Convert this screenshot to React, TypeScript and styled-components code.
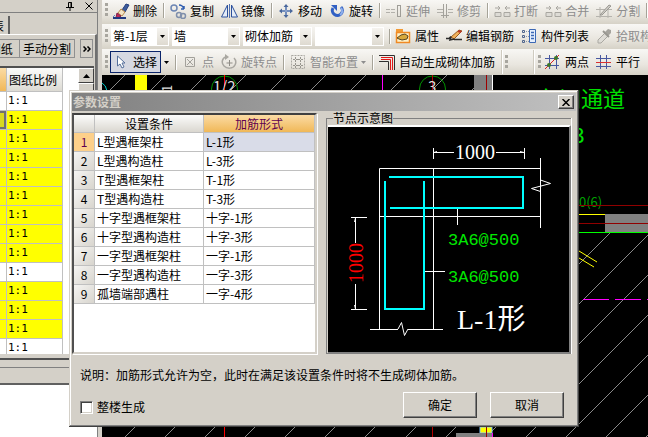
import React from "react";
import styled, { createGlobalStyle, css } from "styled-components";

const face = "#d4d0c8";
const ui = `"Noto Sans CJK SC", "Liberation Sans", sans-serif`;
const serif = `"Liberation Serif", "Noto Sans CJK SC", serif`;

const GlobalStyle = createGlobalStyle`
  * { box-sizing: border-box; }
  html, body { margin: 0; height: 100%; overflow: hidden; }
  body { background: #000; color: #000; font: 12px/16px ${ui}; }
  button, select, input { font: inherit; color: inherit; margin: 0; padding: 0; border-radius: 0; }
  table { border-collapse: separate; border-spacing: 0; }
  svg { display: block; flex: none; }
`;

/* ---------- page frame ---------- */

const Page = styled.div`
  display: grid;
  grid-template-columns: 102px minmax(0, 1fr);
  height: 100vh;
  overflow: hidden;
`;

const Side = styled.aside`
  display: flex;
  flex-direction: column;
  background: #fff;
  border-right: 4px solid ${face};
  box-shadow: inset -1px 0 #808080;
  overflow: hidden;
`;

const Main = styled.main`
  display: flex;
  flex-direction: column;
  min-width: 0;
`;

/* ---------- left panel ---------- */

const SidePanel = styled.section`
  background: ${face};
  border-bottom: 2px solid #606060;
  margin-right: 1px;
`;

const Caption = styled.header`
  display: flex;
  justify-content: flex-end;
  align-items: center;
  gap: 11px;
  height: 13px;
  padding-right: 4px;
  border-bottom: 1px solid #808080;
`;

const IconButton = styled.button`
  display: flex;
  background: none;
  border: 0;
`;

const TabStrip = styled.div`
  display: flex;
  align-items: flex-end;
  height: 21px;
`;

const Tab = styled.button`
  display: flex;
  justify-content: flex-end;
  align-items: center;
  width: 10px;
  height: 18px;
  padding-right: 4px;
  padding-top: 1px;
  overflow: hidden;
  background: ${face};
  border: 0;
  border-right: 2px solid #606060;
  white-space: nowrap;
`;

const TabPage = styled.div`
  padding-bottom: 2px;
  border-top: 1px solid #fff;
  border-right: 2px solid #707070;
  border-bottom: 2px solid #505050;
`;

const SideTools = styled.div`
  display: flex;
  height: 31px;
  padding: 4px 2px 8px 0;
`;

const SideButton = styled.button<{ $w: number; $clip?: boolean; $gap?: number }>`
  display: flex;
  justify-content: ${(p) => (p.$clip ? "flex-end" : "center")};
  align-items: center;
  width: ${(p) => p.$w}px;
  margin-left: ${(p) => p.$gap ?? 0}px;
  padding-right: ${(p) => (p.$clip ? 6 : 0)}px;
  overflow: hidden;
  white-space: nowrap;
  background: ${face};
  border: 1px solid #909090;
  border-left-width: ${(p) => (p.$gap ? 1 : 0)}px;
`;

const SheetFrame = styled.div`
  display: flex;
  height: 290px;
  margin-right: 1px;
  overflow: hidden;
  background: #fff;
  border-top: 2px solid #505050;
  border-bottom: 2px solid ${face};
`;

const Sheet = styled.table`
  flex: none;
  align-self: flex-start;
  width: 63px;
  table-layout: fixed;
  line-height: 16px;
`;

const SheetHead = styled.th<{ $active?: boolean }>`
  height: 24px;
  padding: 0 2px;
  overflow: hidden;
  white-space: nowrap;
  text-align: left;
  font-weight: 400;
  background: ${(p) =>
    p.$active ? "linear-gradient(#fbdba4, #f0b858)" : "linear-gradient(#fbfbfa, #dcdad3)"};
  border-right: 1px solid #c0c0c0;
  border-bottom: 1px solid #c0c0c0;
`;

const SheetCell = styled.td<{ $marked: boolean; $current?: boolean }>`
  height: 19px;
  padding: 0 1px;
  background: ${(p) => (p.$current ? "#d8d820" : p.$marked ? "#ff0" : "#fff")};
  border-right: 1px solid #c0c0c0;
  border-bottom: 1px solid #c0c0c0;
  font: 11px/18px "DejaVu Sans Mono", monospace;
  ${(p) =>
    p.$current &&
    css`
      box-shadow: inset -2px 2px #707070, inset 0 -2px #707070;
    `}
`;

const ScrollBar = styled.div`
  flex: none;
  width: 16px;
  margin-left: auto;
  background: #ebe9e4;
`;

const ScrollPart = styled.button<{ $h: number }>`
  display: flex;
  justify-content: center;
  align-items: center;
  width: 16px;
  height: ${(p) => p.$h}px;
  background: ${face};
  border: 1px solid;
  border-color: #fff #404040 #404040 #fff;
`;

const SideFooter = styled.div`
  height: 8px;
  border-bottom: 1px solid #808080;
`;

const SideStatus = styled.div`
  height: 15px;
`;

/* ---------- tool bars ---------- */

const Bar = styled.div<{ $h: number; $low?: number }>`
  display: flex;
  align-items: center;
  height: ${(p) => p.$h}px;
  padding-left: 3px;
  padding-bottom: ${(p) => p.$low ?? 0}px;
  overflow: hidden;
  white-space: nowrap;
  background: linear-gradient(#f8f7f4, #e9e6df 60%, #d6d2c7);
`;

const Grip = styled.i<{ $lead?: number }>`
  flex: none;
  width: 3px;
  height: 15px;
  margin-left: ${(p) => p.$lead ?? 0}px;
  background: repeating-linear-gradient(#a8a69f 0 3px, transparent 3px 5px);
`;

const Tools = styled.div<{ $lead: number }>`
  display: flex;
  align-items: center;
  gap: 7px;
  margin-left: ${(p) => p.$lead}px;
`;

const ToolButton = styled.button<{ $off?: boolean }>`
  flex: none;
  display: flex;
  align-items: center;
  gap: 3px;
  height: 20px;
  background: none;
  border: 0;
  color: ${(p) => (p.$off ? "#8d8d8d" : "#000")};
`;

const PickButton = styled(ToolButton)`
  gap: 7px;
  width: 51px;
  height: 22px;
  padding-left: 5px;
  margin-left: 2px;
  background: #d6d8e2;
  border: 1px solid #0a246a;
`;

const Divider = styled.i`
  flex: none;
  width: 1px;
  height: 15px;
  margin: 0 -1px;
  background: #a6a398;
  box-shadow: 1px 0 #fff;
`;

const BarEnd = styled.i<{ $lead: number }>`
  flex: none;
  width: 2px;
  height: 24px;
  margin-left: ${(p) => p.$lead}px;
  background: #cfcbc0;
  border-right: 1px solid #fff;
`;

const ComboWrap = styled.label<{ $w: number }>`
  position: relative;
  flex: none;
  width: ${(p) => p.$w}px;
  height: 19px;
  background: #fff;
`;

const ComboSelect = styled.select`
  appearance: none;
  width: 100%;
  height: 19px;
  padding-left: 2px;
  background: transparent;
  border: 0;
  outline: 0;
`;

const ComboArrow = styled.span`
  position: absolute;
  top: 1px;
  right: 1px;
  display: flex;
  justify-content: center;
  align-items: center;
  width: 11px;
  height: 17px;
  background: linear-gradient(#f5f3ef, #dedad0);
  pointer-events: none;
`;

const Combos = styled.div`
  display: flex;
  gap: 3px;
  margin-left: 3px;
  margin-right: 6px;
`;

const Canvas = styled.div`
  flex: 1;
  min-height: 0;
  overflow: hidden;
  background: #000;
`;

/* ---------- dialog ---------- */

const Dialog = styled.section`
  position: absolute;
  top: 90px;
  left: 69px;
  right: 69px;
  padding: 3px;
  background: ${face};
  box-shadow: inset -1px -1px #404040, inset 1px 1px ${face}, inset -2px -2px #808080,
    inset 2px 2px #fff;
`;

const TitleBar = styled.header`
  display: flex;
  justify-content: space-between;
  align-items: center;
  height: 18px;
  padding: 0 2px 0 1px;
  background: linear-gradient(90deg, #808080, #c0c0c0);
`;

const Title = styled.h1`
  margin: 0;
  font: 700 12px/16px ${ui};
  color: ${face};
`;

const raised = css`
  background: ${face};
  border: 1px solid;
  border-color: #fff #404040 #404040 #fff;
  box-shadow: inset -1px -1px #808080;
`;

const CloseButton = styled.button`
  ${raised}
  display: flex;
  justify-content: center;
  align-items: center;
  width: 16px;
  height: 14px;
`;

const Body = styled.div`
  display: grid;
  grid-template-columns: minmax(0, 1fr) minmax(0, 1fr);
  gap: 9px;
  padding: 1px 5px 0 0;
`;

const GridFrame = styled.div`
  margin-top: 1px;
  background: #fff;
  border: 2px solid;
  border-color: #404040 ${face} ${face} #505050;
  box-shadow: 1px 1px #fff;
`;

const RuleTable = styled.table`
  width: 100%;
  table-layout: fixed;
`;

const lines = css`
  padding: 0 2px;
  overflow: hidden;
  white-space: nowrap;
  border-right: 1px solid #c0c0c0;
  border-bottom: 1px solid #c0c0c0;
`;

const HeadCell = styled.th<{ $active?: boolean }>`
  ${lines}
  height: 18px;
  font-weight: 400;
  line-height: 17px;
  color: ${(p) => (p.$active ? "#600050" : "#000")};
  background: ${(p) =>
    p.$active ? "linear-gradient(#fbdba4, #f0b858)" : "linear-gradient(#fcfcfb, #dad7d0)"};
`;

const NumberCell = styled.th<{ $active?: boolean }>`
  ${lines}
  height: 19px;
  font-weight: 400;
  line-height: 18px;
  color: ${(p) => (p.$active ? "#600050" : "#000")};
  background: ${(p) => (p.$active ? "#fdd08a" : "linear-gradient(135deg, #f6f5f3, #d8d5ce)")};
`;

const Cell = styled.td<{ $active?: boolean }>`
  ${lines}
  height: 19px;
  line-height: 18px;
  background: ${(p) => (p.$active ? "#d9dce8" : "#fff")};
`;

const Group = styled.fieldset`
  min-width: 0;
  margin: 0;
  padding: 0;
  border: 1px solid #808080;
  border-right: 0;
  box-shadow: 1px 0 #fff;
`;

const Legend = styled.legend`
  margin-left: 6px;
  padding: 0;
  height: 13px;
  line-height: 12px;
`;

const Preview = styled.div`
  margin-left: 1px;
  background: #000;
  border-top: 2px solid #fff;
  border-right: 2px solid #808080;
  border-bottom: 1px solid #808080;
`;

const Note = styled.p`
  margin: 12px 8px 9px;
  line-height: 17px;
`;

const Footer = styled.footer`
  display: flex;
  align-items: center;
  gap: 13px;
  padding: 0 12px 6px 8px;
`;

const CheckLabel = styled.label`
  display: flex;
  align-items: center;
  gap: 4px;
  margin-right: auto;
  padding-top: 4px;
`;

const Check = styled.input`
  appearance: none;
  width: 13px;
  height: 13px;
  background: #fff;
  border: 1px solid;
  border-color: #808080 #fff #fff #808080;
  box-shadow: inset 1px 1px #404040, inset -1px -1px ${face};
  &:checked { background: #404040; }
`;

const PushButton = styled.button`
  ${raised}
  width: 74px;
  height: 26px;
`;

/* ---------- icons ---------- */

const Icon = ({ children, w = 17 }: { children: React.ReactNode; w?: number }) => (
  <svg width={w} height="16" viewBox={`0 0 ${w} 16`} fill="none" aria-hidden="true">
    {children}
  </svg>
);

const EraseIcon = () => (
  <Icon>
    <path d="M9 7 13 1l3 1-4 7z" fill="#3d5c9c" stroke="#27407c" />
    <path d="m8 6 4 3-3 4-4-3z" fill="#f3e4c6" stroke="#b88a4c" />
    <path d="m4 10 4 3-2 1.500H3z" fill="#c02858" stroke="#802048" />
    <path d="M0 15h13" stroke="#203880" strokeWidth="2" />
    <path d="M2 12 0 14" stroke="#6080c0" />
  </Icon>
);
const CopyIcon = () => (
  <Icon>
    <circle cx="4" cy="5" r="3" stroke="#6d86b4" strokeWidth="1.500" />
    <circle cx="9" cy="12" r="2.500" stroke="#8090ac" strokeWidth="1.500" />
    <circle cx="13" cy="13" r="2.500" stroke="#8090ac" strokeWidth="1.500" />
    <path d="M9 2c3 0 4 1 5 4m0 0V3m0 3h-3" stroke="#2f5db0" strokeWidth="1.500" />
  </Icon>
);
const MirrorIcon = () => (
  <Icon>
    <path d="M6.500 2v12h-6zM10.500 2v12h6z" fill="#e4ecf8" stroke="#2c509c" />
    <path d="M8.500 1v14" stroke="#5070b0" />
  </Icon>
);
const MoveIcon = () => (
  <Icon>
    <path d="M8 3v10M3 8h10" stroke="#4a689c" strokeWidth="2" />
    <path d="m8 1 2.500 3h-5zM8 15l2.500-3h-5zM1 8l3-2.500v5zM15 8l-3-2.500v5z" fill="#4a689c" />
    <path d="M8 4v8M4 8h8" stroke="#9fb4dc" />
  </Icon>
);
const SpinIcon = () => (
  <Icon>
    <path d="M12 4a5 5 0 1 1-8 1" stroke="#3160c4" strokeWidth="3" />
    <path d="M12 5a4.500 4.500 0 0 1-1 7" stroke="#8fb0ec" strokeWidth="2" />
    <path d="M2 2h6v6z" fill="#3160c4" />
  </Icon>
);
const ExtendIcon = () => (
  <Icon>
    <path d="M0 6.500h9M0 9.500h9" stroke="#b3b1ab" strokeDasharray="4 1" />
    <path d="M11.500 2v12M14.500 2v12M11 2.500h4M11 13.500h4" stroke="#9f9d97" />
  </Icon>
);
const TrimIcon = () => (
  <Icon>
    <path d="M0 6.500h6M0 9.500h6M11 6.500h5M11 9.500h5" stroke="#b3b1ab" />
    <path d="M6.500 1v14M9.500 1v14M4 12.500h8" stroke="#a3a19b" />
  </Icon>
);
const BreakIcon = () => (
  <Icon>
    <path d="M1 9.500h6v4H1zM10 9.500h6v4h-6z" fill="#dddbd5" stroke="#a9a7a1" />
    <path d="M1 5h5m0 0L4 3m2 2L4 7M16 5h-5m0 0 2-2m-2 2 2 2" stroke="#a9a7a1" />
  </Icon>
);
const SplitIcon = () => (
  <Icon>
    <path d="M0 6.500h16M0 13.500h16M4 4v11M12 4v11" stroke="#b5b3ad" />
    <path d="m4 12 9-10 2 1-9 9z" fill="#cfcdc7" stroke="#999791" />
  </Icon>
);
const PropertyIcon = () => (
  <Icon>
    <path d="M1 1h7v3H1z" fill="#f29a34" />
    <path d="M1.500 4.500h13v10h-13z" fill="#fff2c8" stroke="#f08a24" strokeWidth="1.500" />
    <path d="m2 10 4-3 4-1 3 2-1 3-5 1-3-1z" fill="#d7a83c" stroke="#5a4520" />
  </Icon>
);
const EditIcon = () => (
  <Icon>
    <path d="M5 9 13 2l3 1-8 8z" fill="#f2b25c" stroke="#9a5c20" />
    <path d="m13 2 3 1-1.500 2-3-1z" fill="#b83828" />
    <path d="M0 10.500h3l2-2m3 3h8M5 9l-1 3 4-1" stroke="#2b2b2b" strokeWidth="1.500" />
  </Icon>
);
const ListIcon = () => (
  <Icon>
    <path d="M1.500 2.500h2v2h-2zM1.500 7.500h2v2h-2zM1.500 12.500h2v2h-2z" stroke="#4e648c" />
    <path d="M5 3.500h3M5 8.500h3M5 13.500h3" stroke="#8a94a8" strokeDasharray="1 1" />
    <path d="M8.500 1.500h6v13h-6z" fill="#e6effc" stroke="#3c68b4" />
    <path d="M10 4.500h3M10 7.500h3M10 10.500h3" stroke="#3c68b4" strokeWidth="1.500" />
  </Icon>
);
const DropperIcon = () => (
  <Icon>
    <path d="m9 4 3-3 3 1v3l-3 3z" fill="#a5a39d" />
    <path d="m9 5 3 3-7 7H2v-3z" fill="#dedcd6" stroke="#aaa8a2" />
    <path d="m7 3 6 6" stroke="#989690" strokeWidth="2" />
  </Icon>
);
const CursorIcon = () => (
  <Icon w={10}>
    <path d="M1.500 2v10l2.500-2 2 4 2-1-2-4h3z" fill="#fff" stroke="#566f9c" />
  </Icon>
);
const PointIcon = () => (
  <Icon>
    <path d="M3.500 3.500h9v9h-9zM5 5l6 6M11 5l-6 6" stroke="#a3a19b" />
  </Icon>
);
const SpinPointIcon = () => (
  <Icon>
    <path d="M5 3C1 4 0 9 3 12s9 3 11-1 0-6-1-7" stroke="#a9a7a1" strokeWidth="1.500" />
    <path d="M8.500 6v6M5.500 9h6" stroke="#8f8d87" />
    <path d="M4 0v6l4-3z" fill="#a9a7a1" />
  </Icon>
);
const LayoutIcon = () => (
  <Icon>
    <path d="M1.500 1.500h13v13h-13z" stroke="#aaa8a2" strokeDasharray="2 1" />
    <path
      d="M5.500 3v5M3 5.500h5M10.500 3v5M8 5.500h5M5.500 9v5M3 11.500h5M10.500 9v5M8 11.500h5"
      stroke="#98968f"
      strokeDasharray="2 1"
    />
  </Icon>
);
const RebarIcon = () => (
  <Icon>
    <path d="M0 1.500h15.500V16M0 7.500h9.500V16" stroke="#303030" />
    <path d="M2 3.500h11.500V16M2 5.500h9.500V16" stroke="#e01818" />
  </Icon>
);
const TwoPointIcon = () => (
  <Icon>
    <path d="M4.500 1v14M11.500 1v14M0 4.500h14M0 11.500h14" stroke="#4858a0" />
    <path d="M0 15 14 1" stroke="#e02020" />
    <circle cx="4" cy="11" r="2" fill="#3c7828" />
    <circle cx="11" cy="4" r="2" fill="#3c7828" />
  </Icon>
);
const ParallelIcon = () => (
  <Icon>
    <path d="M4.500 1v14M10.500 1v14M0 4.500h15M0 12.500h15" stroke="#4858a0" />
    <path d="M0 8.500h15" stroke="#d83030" />
  </Icon>
);
const Down = ({ color = "#000" }: { color?: string }) => (
  <svg width="5" height="3" viewBox="0 0 5 3" aria-hidden="true">
    <path d="M0 0h5L2.500 3z" fill={color} />
  </svg>
);

/* ---------- drawings ---------- */

const hatch = Array.from({ length: 23 }, (_, i) => 361 + Math.round((i - 4) * 40.13));

const PlanDrawing = () => (
  <svg width="100%" height="100%" fontFamily={ui}>
    <defs>
      <clipPath id="hatchArea">
        <path d="M102 75H474V233H648V437H102z" />
      </clipPath>
    </defs>
    <g transform="translate(-102 -75)" fill="none">
      <g stroke="#8a8a8a" clipPath="url(#hatchArea)">
        {hatch.map((c) => (
          <path key={c} d={`M${c - 75} 75L${c - 437} 437`} />
        ))}
      </g>
      <path d="M102 83q4 2 5 8" stroke="#0cc" />
      <path d="M135 75h12v16h-12z" fill="#ff0" />
      <text transform="translate(172 92) rotate(-90)" fontSize="13" fill="#ddd">1</text>
      <g stroke="#009000">
        <circle cx="224.500" cy="89" r="13" />
        <circle cx="432.500" cy="89" r="13" />
      </g>
      <path d="M224.500 75v362" stroke="#f00" />
      <path d="M432.500 75v362" stroke="#b00000" />
      <text x="213" y="92" fontSize="15" fill="#ddd">1/2</text>
      <text x="428" y="92" fontSize="15" fill="#ddd">3</text>
      <path d="M382.500 75v16" stroke="#f0f" />
      <path d="M474 75h18v16h-18z" fill="#808080" />
      <path d="M486.500 75v16" stroke="#a00000" />
      <path d="M492.500 75v16" stroke="#fff" />
      <g fill="#00e000">
        <text x="537" y="107" fontSize="22">车间通道</text>
        <text x="573" y="143" fontSize="21">3</text>
        <text x="579" y="207" fontSize="13" fill="#00a000">0(6)</text>
      </g>
      <path d="M605 214h43v18h-43z" fill="#808080" />
      <path d="M579 205.500h69M579 223.500h69" stroke="#900000" />
      <path d="M579 214.500h26" stroke="#ff0" />
      <path d="M579 232.500h69" stroke="#0f0" />
      <path d="m579 251 18 11M579 258l15 9" stroke="#ff0" />
      <path d="M583 299.500h26M615 299.500h26M647 299.500h26" stroke="#f0f" />
      <path d="M480 427h12v6h-12z" fill="#ff0" stroke="#80c0ff" />
      <path d="M456 433h36v4h-36z" fill="#808080" />
      <path d="M486.500 427v10" stroke="#a00000" />
      <path d="M492.500 433v4" stroke="#f0f" />
    </g>
  </svg>
);

const NodeDrawing = () => (
  <svg width="100%" viewBox="0 0 241 225" fill="none" role="img" aria-label="L-1形">
    <g stroke="#fff">
      <path d="M105.500 21v11M196.500 21v11M105 25.500h21M168 25.500h28" />
      <path d="M51.500 202V41.500h161M51 89.500h161M105.500 41v161M212.500 31v70M42 202.500h28M80 202.500h35" />
      <path d="m212.500 53 10 3.500-19 5 9 3M70 202l3.500-6.500 3 13 3.500-6.500" />
      <path d="M129.500 81v17M97 144.500h20" />
      <path d="M23 90.500h16M23 182.500h16M27.500 90v26M27.500 157v25" />
      <path d="m106 25.500 3-1M196 25.500l-4-1M27.500 91l-1 4M27.500 182l-1-4" />
    </g>
    <path d="M61 50h134v31H62M57 54v128h39V54" stroke="#0ff" strokeWidth="2" />
    <g fontFamily={serif} fontSize="20">
      <text x="127" y="32" fill="#fff">1000</text>
      <text transform="translate(35 156) rotate(-90)" fill="#f00">1000</text>
      <text x="129" y="202" fontSize="28" fill="#fff">L-1形</text>
    </g>
    <g fontFamily={`"Liberation Mono", monospace`} fontSize="17" fill="#00e800">
      <text x="120" y="118">3A6@500</text>
      <text x="120" y="155">3A6@500</text>
    </g>
  </svg>
);

/* ---------- parts ---------- */

type ToolProps = { icon: React.ReactNode; label: string; off?: boolean };
const Tool = ({ icon, label, off }: ToolProps) => (
  <ToolButton type="button" $off={off} aria-disabled={off}>
    {icon}
    {label}
  </ToolButton>
);

const Combo = ({ name, value, w }: { name: string; value: string; w: number }) => (
  <ComboWrap $w={w}>
    <ComboSelect aria-label={name} defaultValue={value}>
      <option value={value}>{value}</option>
    </ComboSelect>
    <ComboArrow>
      <Down />
    </ComboArrow>
  </ComboWrap>
);

const rules = [
  ["L型遇框架柱", "L-1形"],
  ["L型遇构造柱", "L-3形"],
  ["T型遇框架柱", "T-1形"],
  ["T型遇构造柱", "T-3形"],
  ["十字型遇框架柱", "十字-1形"],
  ["十字型遇构造柱", "十字-3形"],
  ["一字型遇框架柱", "一字-1形"],
  ["一字型遇构造柱", "一字-3形"],
  ["孤墙端部遇柱", "一字-4形"],
];

const sheetMarks = [0, 1, 1, 1, 1, 1, 1, 1, 1, 0, 1, 1, 1, 0].map(Boolean);

const SheetColumn = styled.col`
  width: 7px;
`;

const NumberColumn = styled.col`
  width: 21px;
`;

const ConditionColumn = styled.col`
  width: 109px;
`;

const SidePane = () => (
  <Side>
    <SidePanel>
      <Caption>
        <IconButton type="button" aria-label="固定">
          <svg width="8" height="9" viewBox="0 0 8 9" fill="none" stroke="#000">
            <path d="M2.500 5V.5h3V5M5 0v5M0 5.500h8M4 6v3" />
          </svg>
        </IconButton>
        <IconButton type="button" aria-label="关闭面板">
          <svg width="8" height="8" viewBox="0 0 8 8" stroke="#000">
            <path d="m.5.5 7 7m0-7-7 7" />
          </svg>
        </IconButton>
      </Caption>
      <TabStrip>
        <Tab type="button">表</Tab>
      </TabStrip>
      <TabPage>
        <SideTools>
          <SideButton type="button" $w={20} $clip>图纸</SideButton>
          <SideButton type="button" $w={57}>手动分割</SideButton>
          <SideButton type="button" $w={13} $gap={5} aria-label="更多">
            <svg width="8" height="6" viewBox="0 0 8 6" fill="none" stroke="#000">
              <path d="m.5.5 2.500 2.500L.5 5.500m4-5L7 3 4.500 5.500" strokeWidth="1.500" />
            </svg>
          </SideButton>
        </SideTools>
        <SheetFrame>
          <Sheet>
            <colgroup>
              <SheetColumn />
              <col />
            </colgroup>
            <thead>
              <tr>
                <SheetHead $active />
                <SheetHead>图纸比例</SheetHead>
              </tr>
            </thead>
            <tbody>
              {sheetMarks.map((marked, i) => (
                <tr key={i}>
                  <SheetCell $marked={marked} $current={i === 1} />
                  <SheetCell $marked={marked}>1:1</SheetCell>
                </tr>
              ))}
            </tbody>
          </Sheet>
          <ScrollBar>
            <ScrollPart type="button" $h={15} aria-label="向上滚动">
              <svg width="7" height="4" viewBox="0 0 7 4">
                <path d="M0 4h7L3.500 0z" />
              </svg>
            </ScrollPart>
            <ScrollPart type="button" $h={120} aria-label="滚动块" />
          </ScrollBar>
        </SheetFrame>
      </TabPage>
      <SideFooter />
      <SideStatus />
    </SidePanel>
  </Side>
);

const ParameterDialog = () => (
  <Dialog role="dialog" aria-labelledby="dialog-title">
    <TitleBar>
      <Title id="dialog-title">参数设置</Title>
      <CloseButton type="button" aria-label="关闭">
        <svg width="8" height="7" viewBox="0 0 8 7" stroke="#000" strokeWidth="1.500">
          <path d="m.5 0 7 7m0-7-7 7" />
        </svg>
      </CloseButton>
    </TitleBar>
    <Body>
      <GridFrame>
        <RuleTable>
          <colgroup>
            <NumberColumn />
            <ConditionColumn />
            <col />
          </colgroup>
          <thead>
            <tr>
              <HeadCell />
              <HeadCell scope="col">设置条件</HeadCell>
              <HeadCell scope="col" $active>加筋形式</HeadCell>
            </tr>
          </thead>
          <tbody>
            {rules.map(([condition, form], i) => (
              <tr key={condition}>
                <NumberCell scope="row" $active={i === 0}>{i + 1}</NumberCell>
                <Cell>{condition}</Cell>
                <Cell $active={i === 0}>{form}</Cell>
              </tr>
            ))}
          </tbody>
        </RuleTable>
      </GridFrame>
      <Group>
        <Legend>节点示意图</Legend>
        <Preview>
          <NodeDrawing />
        </Preview>
      </Group>
    </Body>
    <Note>说明：加筋形式允许为空，此时在满足该设置条件时将不生成砌体加筋。</Note>
    <Footer>
      <CheckLabel>
        <Check type="checkbox" />
        整楼生成
      </CheckLabel>
      <PushButton type="button">确定</PushButton>
      <PushButton type="button">取消</PushButton>
    </Footer>
  </Dialog>
);

export default function App() {
  return (
    <>
      <GlobalStyle />
      <Page>
        <SidePane />
        <Main>
          <Bar $h={24} $low={3}>
            <Grip />
            <Tools $lead={5}>
              <Tool icon={<EraseIcon />} label="删除" />
              <Divider />
              <Tool icon={<CopyIcon />} label="复制" />
              <Tool icon={<MirrorIcon />} label="镜像" />
              <Divider />
              <Tool icon={<MoveIcon />} label="移动" />
              <Tool icon={<SpinIcon />} label="旋转" />
              <Divider />
              <Tool off icon={<ExtendIcon />} label="延伸" />
              <Tool off icon={<TrimIcon />} label="修剪" />
              <Divider />
              <Tool off icon={<BreakIcon />} label="打断" />
              <Tool off icon={<BreakIcon />} label="合并" />
              <Tool off icon={<SplitIcon />} label="分割" />
              <Divider />
            </Tools>
          </Bar>
          <Bar $h={25} $low={1}>
            <Grip />
            <Combos>
              <Combo name="楼层" value="第-1层" w={58} />
              <Combo name="构件类型" value="墙" w={68} />
              <Combo name="构件" value="砌体加筋" w={69} />
              <Combo name="名称" value="" w={69} />
            </Combos>
            <Divider />
            <Tools $lead={6}>
              <Tool icon={<PropertyIcon />} label="属性" />
              <Tool icon={<EditIcon />} label="编辑钢筋" />
              <Tool icon={<ListIcon />} label="构件列表" />
              <Tool off icon={<DropperIcon />} label="拾取构件" />
            </Tools>
          </Bar>
          <Bar $h={26}>
            <Grip />
            <PickButton type="button">
              <CursorIcon />
              选择
            </PickButton>
            <Tools $lead={3}>
              <Down />
              <Divider />
              <Tool off icon={<PointIcon />} label="点" />
              <Tool off icon={<SpinPointIcon />} label="旋转点" />
              <Divider />
              <ToolButton type="button" $off>
                <LayoutIcon />
                智能布置
                <Down color="#8d8d8d" />
              </ToolButton>
              <Divider />
              <Tool icon={<RebarIcon />} label="自动生成砌体加筋" />
            </Tools>
            <BarEnd $lead={6} />
            <Grip $lead={2} />
            <BarEnd $lead={25} />
            <Grip $lead={3} />
            <Tools $lead={4}>
              <Tool icon={<TwoPointIcon />} label="两点" />
              <Tool icon={<ParallelIcon />} label="平行" />
            </Tools>
          </Bar>
          <Canvas>
            <PlanDrawing />
          </Canvas>
        </Main>
      </Page>
      <ParameterDialog />
    </>
  );
}
